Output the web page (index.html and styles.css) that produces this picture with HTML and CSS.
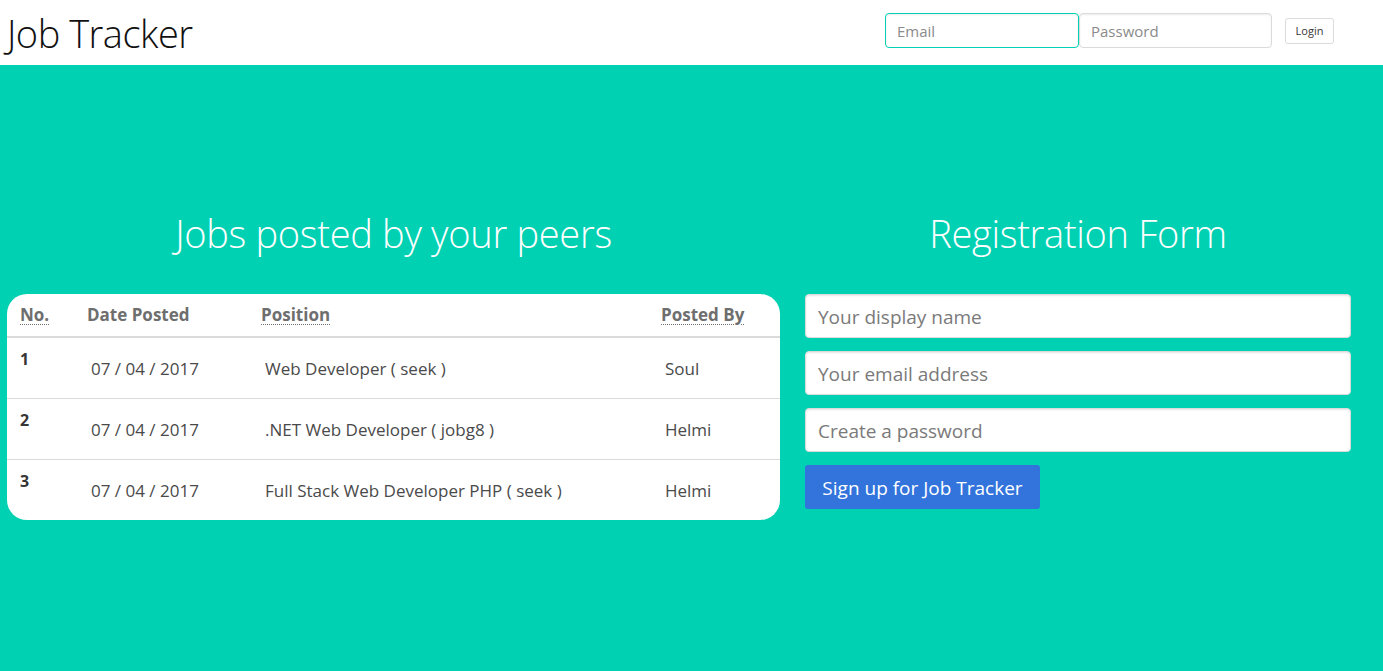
FILE: index.html
```html
<!DOCTYPE html>
<html lang="en">
<head>
<meta charset="utf-8">
<title>Job Tracker</title>
<link rel="stylesheet" href="styles.css">
</head>
<body>
<header class="navbar">
  <h1 class="brand">Job Tracker</h1>
  <form class="login">
    <input class="login-input focused" type="email" placeholder="Email">
    <input class="login-input" type="password" placeholder="Password">
    <button class="login-btn" type="button">Login</button>
  </form>
</header>
<main class="main">
  <section class="col col-left">
    <h2 class="heading">Jobs posted by your peers</h2>
    <div class="card">
      <table class="jobs">
        <thead>
          <tr>
            <th class="c1"><abbr title="Number">No.</abbr></th>
            <th class="c2">Date Posted</th>
            <th class="c3"><abbr title="Position">Position</abbr></th>
            <th class="c4"><abbr title="Posted By">Posted By</abbr></th>
          </tr>
        </thead>
        <tbody>
          <tr>
            <th class="num">1</th>
            <td>07 / 04 / 2017</td>
            <td>Web Developer ( seek )</td>
            <td>Soul</td>
          </tr>
          <tr>
            <th class="num">2</th>
            <td>07 / 04 / 2017</td>
            <td>.NET Web Developer ( jobg8 )</td>
            <td>Helmi</td>
          </tr>
          <tr class="last">
            <th class="num">3</th>
            <td>07 / 04 / 2017</td>
            <td>Full Stack Web Developer PHP ( seek )</td>
            <td>Helmi</td>
          </tr>
        </tbody>
      </table>
    </div>
  </section>
  <section class="col col-right">
    <h2 class="heading">Registration Form</h2>
    <form class="register">
      <input class="reg-input" type="text" placeholder="Your display name">
      <input class="reg-input" type="email" placeholder="Your email address">
      <input class="reg-input" type="password" placeholder="Create a password">
      <button class="reg-btn" type="button">Sign up for Job Tracker</button>
    </form>
  </section>
</main>
</body>
</html>
```
FILE: styles.css
```css
* { box-sizing: border-box; }
html, body { margin: 0; padding: 0; }
body {
  font-family: "Open Sans", "Noto Sans", "Liberation Sans", sans-serif;
  background: #00d1b2;
  color: #4a4a4a;
  min-height: 671px;
}
.navbar {
  height: 65px;
  background: #fff;
  display: flex;
  align-items: center;
  justify-content: space-between;
  padding: 0 49px 4px 7px;
}
.brand {
  margin: 4px 0 0;
  font-size: 38px;
  font-weight: 300;
  color: #111;
  line-height: 48px;
  letter-spacing: -0.5px;
}
.login {
  display: flex;
  align-items: center;
}
.login-input {
  width: 193px;
  height: 35px;
  border: 1px solid #dbdbdb;
  border-radius: 4px;
  padding: 0 11px;
  font-family: inherit;
  font-size: 15px;
  color: #363636;
  box-shadow: inset 0 1px 2px rgba(10,10,10,0.08);
  outline: none;
}
.login-input::placeholder { color: #8a8a8a; }
.login-input.focused { border-color: #00d1b2; width: 194px; }
.login-btn {
  margin-left: 13px;
  width: 49px;
  height: 26px;
  border: 1px solid #dbdbdb;
  border-radius: 3px;
  background: #fff;
  font-family: inherit;
  font-size: 11px;
  color: #363636;
  padding: 0;
}
.main {
  display: grid;
  grid-template-columns: 773px 546px;
  column-gap: 25px;
  padding: 144px 0 0 7px;
}
.heading {
  margin: 0 0 37px;
  text-align: center;
  font-size: 38px;
  font-weight: 300;
  line-height: 48px;
  color: #fff;
  letter-spacing: -0.3px;
}
.card {
  background: #fff;
  border-radius: 20px;
  overflow: hidden;
}
.jobs {
  width: 100%;
  border-collapse: collapse;
  table-layout: fixed;
}
.jobs thead th {
  text-align: left;
  font-size: 17px;
  font-weight: 700;
  color: #6e6e6e;
  line-height: 27px;
  height: 43px;
  padding: 7px 0 7px 13px;
  vertical-align: top;
  border-bottom: 2px solid #dbdbdb;
}
.c1 { width: 67px; }
.c2 { width: 174px; }
.c3 { width: 400px; }
.c4 { width: 132px; }
abbr {
  text-decoration: underline dotted;
  text-underline-offset: 3px;
  text-decoration-thickness: 1px;
}
.jobs tbody td, .jobs tbody th {
  border-bottom: 1px solid #dbdbdb;
  height: 61px;
  vertical-align: top;
}
.jobs tbody tr.last td, .jobs tbody tr.last th { border-bottom: none; height: 61px; }
.jobs tbody td {
  font-size: 17px;
  line-height: 27px;
  padding: 17px 0 0 17px;
  color: #4a4a4a;
}
.jobs tbody th.num {
  text-align: left;
  font-size: 16px;
  font-weight: 700;
  line-height: 24px;
  padding: 9px 0 0 13px;
  color: #363636;
}
.register {
  display: flex;
  flex-direction: column;
  align-items: flex-start;
  gap: 13px;
}
.reg-input {
  width: 546px;
  height: 44px;
  border: 1px solid #dbdbdb;
  border-radius: 4px;
  background: #fff;
  padding: 2px 12px 0;
  font-family: inherit;
  font-size: 19px;
  color: #363636;
  box-shadow: inset 0 1px 2px rgba(10,10,10,0.1);
  outline: none;
}
.reg-input::placeholder { color: #7a7a7a; }
.reg-btn {
  height: 44px;
  width: 235px;
  border: none;
  border-radius: 3px;
  background: #3273dc;
  color: #fff;
  font-family: inherit;
  font-size: 19px;
  padding: 1px 0 0;
  text-align: center;
}
```
